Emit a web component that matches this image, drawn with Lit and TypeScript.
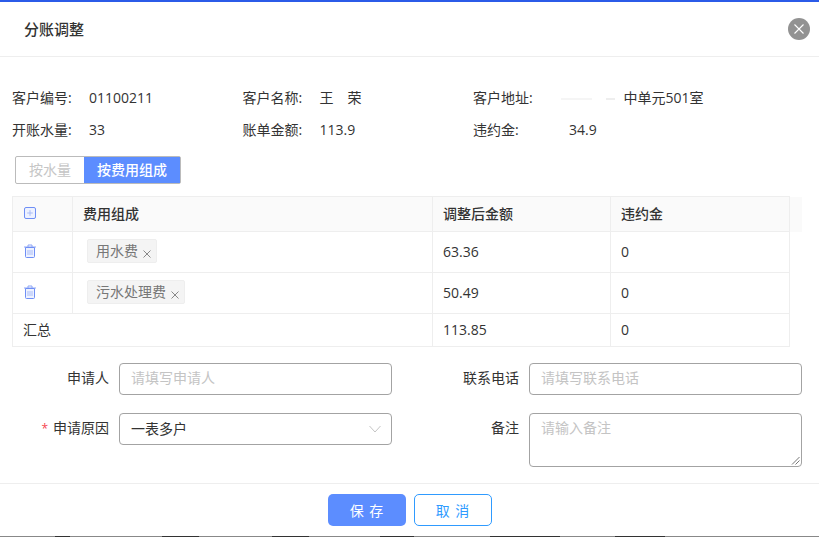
import { css, html, LitElement } from 'lit';
import { customElement } from 'lit/decorators.js';

const INFO = [
  [
    { label: '客户编号:', value: '01100211' },
    { label: '客户名称:', value: '王\u3000荣' },
    { label: '客户地址:', value: '中单元501室', masked: true },
  ],
  [
    { label: '开账水量:', value: '33' },
    { label: '账单金额:', value: '113.9' },
    { label: '违约金:', value: '34.9', wide: true },
  ],
];

const FEES = [
  { name: '用水费', amount: '63.36', late: '0' },
  { name: '污水处理费', amount: '50.49', late: '0' },
];

const plusIcon = html`
  <svg class="ico" viewBox="0 0 12 12" width="12" height="12">
    <rect x="0.5" y="0.5" width="11" height="11" rx="1.5" fill="#eef2ff" stroke="#6f8ff5"></rect>
    <path d="M6 3.2v5.6M3.2 6h5.6" stroke="#a9bcf8" fill="none"></path>
  </svg>
`;

const trashIcon = html`
  <svg class="ico" viewBox="0 0 12 14" width="12" height="14">
    <path d="M0 3h12M4 3V1h4v2" stroke="#8ea6f6" fill="none"></path>
    <path d="M1.5 3.5h9v9a1 1 0 0 1-1 1h-7a1 1 0 0 1-1-1z" fill="#eef2ff" stroke="#6f8ff5"></path>
    <path d="M4 6v5M6 6v5M8 6v5" stroke="#a9bcf8" fill="none"></path>
  </svg>
`;

const tagClose = html`
  <svg class="tag-x" viewBox="0 0 8 8" width="8" height="8">
    <path d="M0.5 0.5l7 7M7.5 0.5l-7 7" stroke="#888" fill="none"></path>
  </svg>
`;

@customElement('app-root')
export class AppRoot extends LitElement {

  renderInfo () {
    return INFO.map((row) => html`
      <div class="info-row">
        ${row.map((item: any) => html`
          <div class="info-item">
            <span class="info-label ${item.wide ? 'wide' : ''}">${item.label}</span>
            ${item.masked ? html`<span class="mask"></span>` : ''}
            <span>${item.value}</span>
          </div>
        `)}
      </div>
    `);
  }

  renderTable () {
    return html`
      <table>
        <colgroup>
          <col class="c-op" />
          <col class="c-name" />
          <col class="c-amount" />
          <col class="c-late" />
          <col class="c-gutter" />
        </colgroup>
        <thead>
          <tr>
            <th class="op">${plusIcon}</th>
            <th>费用组成</th>
            <th>调整后金额</th>
            <th>违约金</th>
            <th class="gutter"></th>
          </tr>
        </thead>
        <tbody>
          ${FEES.map((fee) => html`
            <tr class="fee">
              <td class="op">${trashIcon}</td>
              <td class="tag-cell">
                <span class="tag">${fee.name}${tagClose}</span>
              </td>
              <td>${fee.amount}</td>
              <td>${fee.late}</td>
              <td class="blank"></td>
            </tr>
          `)}
          <tr class="sum">
            <td colspan="2">汇总</td>
            <td>113.85</td>
            <td>0</td>
            <td class="blank"></td>
          </tr>
        </tbody>
      </table>
    `;
  }

  renderForm () {
    return html`
      <div class="form">
        <div class="field">
          <label>申请人</label>
          <div class="input placeholder">请填写申请人</div>
        </div>
        <div class="field">
          <label>联系电话</label>
          <div class="input placeholder">请填写联系电话</div>
        </div>
        <div class="field">
          <label><span class="req">*</span>申请原因</label>
          <div class="input select">
            一表多户
            <svg viewBox="0 0 12 8" width="12" height="8">
              <path d="M0.5 1l5.5 6 5.5-6" fill="none" stroke="#c4c4c4"></path>
            </svg>
          </div>
        </div>
        <div class="field">
          <label>备注</label>
          <div class="input area placeholder">
            请输入备注
            <svg class="grip" viewBox="0 0 9 9" width="9" height="9">
              <path d="M1 8.5L8.5 1M4.5 8.5L8.5 4.5" stroke="#777" fill="none"></path>
            </svg>
          </div>
        </div>
      </div>
    `;
  }

  render () {
    return html`
      <div class="dialog">
        <header>
          <span class="title">分账调整</span>
          <span class="close">
            <svg viewBox="0 0 10 10" width="10" height="10">
              <path d="M0.5 0.5l9 9M9.5 0.5l-9 9" stroke="#fff" stroke-width="1.1" fill="none"></path>
            </svg>
          </span>
        </header>
        <div class="body">
          <div class="info">${this.renderInfo()}</div>
          <div class="switch">
            <span class="off">按水量</span>
            <span class="on">按费用组成</span>
          </div>
          ${this.renderTable()}
          ${this.renderForm()}
        </div>
        <footer>
          <button class="save">保 存</button>
          <button class="cancel">取 消</button>
        </footer>
      </div>
      <div class="edge"></div>
    `;
  }

  static styles = css`
    :host {
      display: block;
      width: 819px;
      height: 537px;
      overflow: hidden;
      background: #fff;
      color: #333;
      font-family: "Open Sans", "Noto Sans CJK SC", sans-serif;
      font-size: 14px;
    }

    .dialog {
      border-top: 2px solid #2b5be8;
      box-sizing: border-box;
      height: 536px;
      display: flex;
      flex-direction: column;
    }

    header {
      height: 55px;
      flex: none;
      box-sizing: border-box;
      border-bottom: 1px solid #eee;
      display: flex;
      align-items: center;
      justify-content: space-between;
      padding: 0 9px 0 24px;
    }

    .title {
      font-size: 15px;
      font-weight: 500;
      color: #333;
      margin-top: -2px;
    }

    .close {
      width: 22px;
      height: 22px;
      border-radius: 50%;
      background: #929292;
      display: flex;
      align-items: center;
      justify-content: center;
    }

    .body {
      flex: 1;
      padding: 31px 0 0 12px;
    }

    .info {
      display: flex;
      flex-direction: column;
      gap: 12px;
    }

    .info-row {
      display: flex;
      height: 20px;
      line-height: 20px;
    }

    .info-item {
      width: 230.5px;
      display: flex;
      white-space: pre;
    }

    .info-label {
      width: 77px;
      color: #333;
    }

    .info-label.wide {
      width: 96px;
    }

    .mask {
      width: 83px;
      height: 2px;
      margin-top: 10px;
      background: linear-gradient(90deg, #fff 0 20%, #f5f5f5 20% 60%, #fff 60% 78%, #eee 78% 90%, #fff 90%);
    }

    .switch {
      display: flex;
      box-sizing: border-box;
      width: 166px;
      height: 28px;
      margin: 16px 0 0 3px;
      border: 1px solid #bbb;
      border-radius: 2px;
      line-height: 26px;
      text-align: center;
    }

    .switch span {
      display: block;
    }

    .off {
      width: 68px;
      color: #c6c6c6;
    }

    .on {
      flex: 1;
      background: #5c8dff;
      color: #fff;
      font-weight: 500;
    }

    table {
      margin-top: 12px;
      width: 789px;
      table-layout: fixed;
      border-collapse: collapse;
      font-size: 14px;
    }

    .c-op { width: 60px; }
    .c-name { width: 360px; }
    .c-amount { width: 178px; }
    .c-late { width: 179px; }
    .c-gutter { width: 12px; }

    th, td {
      border: 1px solid #eee;
      padding: 0 10px 2px;
      text-align: left;
      box-sizing: border-box;
    }

    th {
      height: 35px;
      background: #fafafa;
      font-weight: 500;
      color: #333;
    }

    th.gutter {
      border: none;
      border-bottom: 1px solid #fafafa;
    }

    td.blank {
      border: none;
      border-left: 1px solid #eee;
    }

    .fee td {
      height: 41px;
    }

    .sum td {
      height: 33px;
    }

    .op {
      padding-left: 11px;
      line-height: 0;
    }

    .ico {
      display: inline-block;
      vertical-align: middle;
    }

    .tag-cell {
      padding-left: 14px;
      line-height: 0;
    }

    .tag {
      display: inline-flex;
      align-items: center;
      height: 24px;
      padding: 0 5px 0 8px;
      background: #f4f4f4;
      border: 1px solid #eee;
      border-radius: 2px;
      box-sizing: border-box;
      color: #777;
      line-height: 20px;
    }

    .tag-x {
      margin: 5px 0 0 5px;
    }

    .form {
      display: grid;
      grid-template-columns: 410px 410px;
      margin-top: 16px;
      row-gap: 18px;
      align-items: start;
    }

    .field {
      display: flex;
      gap: 10px;
    }

    label {
      width: 97px;
      flex: none;
      text-align: right;
      line-height: 30px;
      color: #333;
    }

    .req {
      color: #f5454f;
      font-size: 12px;
      margin-right: 5px;
    }

    .input {
      width: 273px;
      height: 32px;
      box-sizing: border-box;
      border: 1px solid #a3a3a3;
      border-radius: 4px;
      padding: 0 11px;
      line-height: 28px;
      position: relative;
    }

    .placeholder {
      color: #c4c4c4;
    }

    .select {
      display: flex;
      align-items: center;
      justify-content: space-between;
      padding-right: 10px;
    }

    .area {
      height: 54px;
    }

    .grip {
      position: absolute;
      right: 1px;
      bottom: 1px;
    }

    footer {
      flex: none;
      height: 53px;
      box-sizing: border-box;
      border-top: 1px solid #eee;
      display: flex;
      justify-content: center;
      gap: 8px;
      padding-top: 10px;
    }

    button {
      width: 78px;
      height: 32px;
      border-radius: 5px;
      font-family: inherit;
      font-size: 14px;
      padding: 0 0 0 1px;
      letter-spacing: 1px;
    }

    .save {
      background: #5c8dff;
      border: none;
      color: #fff;
    }

    .cancel {
      background: #fff;
      border: 1px solid #2f9bff;
      color: #2f9bff;
    }

    .edge {
      height: 1px;
      background: linear-gradient(90deg,
        #888 55px, #333 55px 70px, #888 70px 162px, #333 162px 199px,
        #888 199px 272px, #333 272px 309px, #888 309px 380px, #333 380px 414px,
        #888 414px 490px, #333 490px 560px, #888 560px 615px, #333 615px 665px, #888 665px);
    }
  `;
}
